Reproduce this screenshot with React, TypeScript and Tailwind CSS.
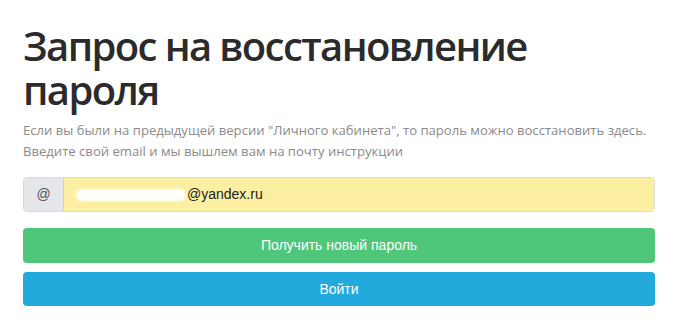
export default function App() {
  return (
    <div className="w-[678px] h-[329px] bg-white overflow-hidden">
      <div className="px-[23px] pt-[24px]">
        <h1 className="text-[40px] leading-[44px] font-semibold text-[#2b2b2b] tracking-[-1.6px] font-['Open_Sans',sans-serif]">
          Запрос на восстановление<br />пароля
        </h1>
        <p className="mt-[8px] text-[13.1px] leading-[21px] text-[#8a8a8a] font-['Open_Sans',sans-serif]">
          Если вы были на предыдущей версии "Личного кабинета", то пароль можно восстановить здесь.<br />
          Введите свой email и мы вышлем вам на почту инструкции
        </p>
        <div className="mt-[15px] flex h-[35px] rounded-[4px] border border-[#d9d9d9] overflow-hidden font-['Liberation_Sans',sans-serif]">
          <div className="w-[40px] flex items-center justify-center bg-[#e4e6e9] border-r border-[#d0d0d0] text-[14px] text-[#555]">@</div>
          <div className="flex-1 bg-[#fdefa2] flex items-center pl-[12px] text-[14px] text-[#222]">
            <span className="w-[110px] h-[12px] bg-white rounded-[6px] mr-[1px] blur-[1px]"></span>
            <span>@yandex.ru</span>
          </div>
        </div>
        <div className="mt-[16px] flex flex-col gap-[9px] font-['Liberation_Sans',sans-serif] text-[14px] text-white">
          <button className="w-full h-[35px] rounded-[4px] bg-[#4fc67a]">Получить новый пароль</button>
          <button className="w-full h-[34px] rounded-[4px] bg-[#23aadd]">Войти</button>
        </div>
      </div>
    </div>
  );
}
